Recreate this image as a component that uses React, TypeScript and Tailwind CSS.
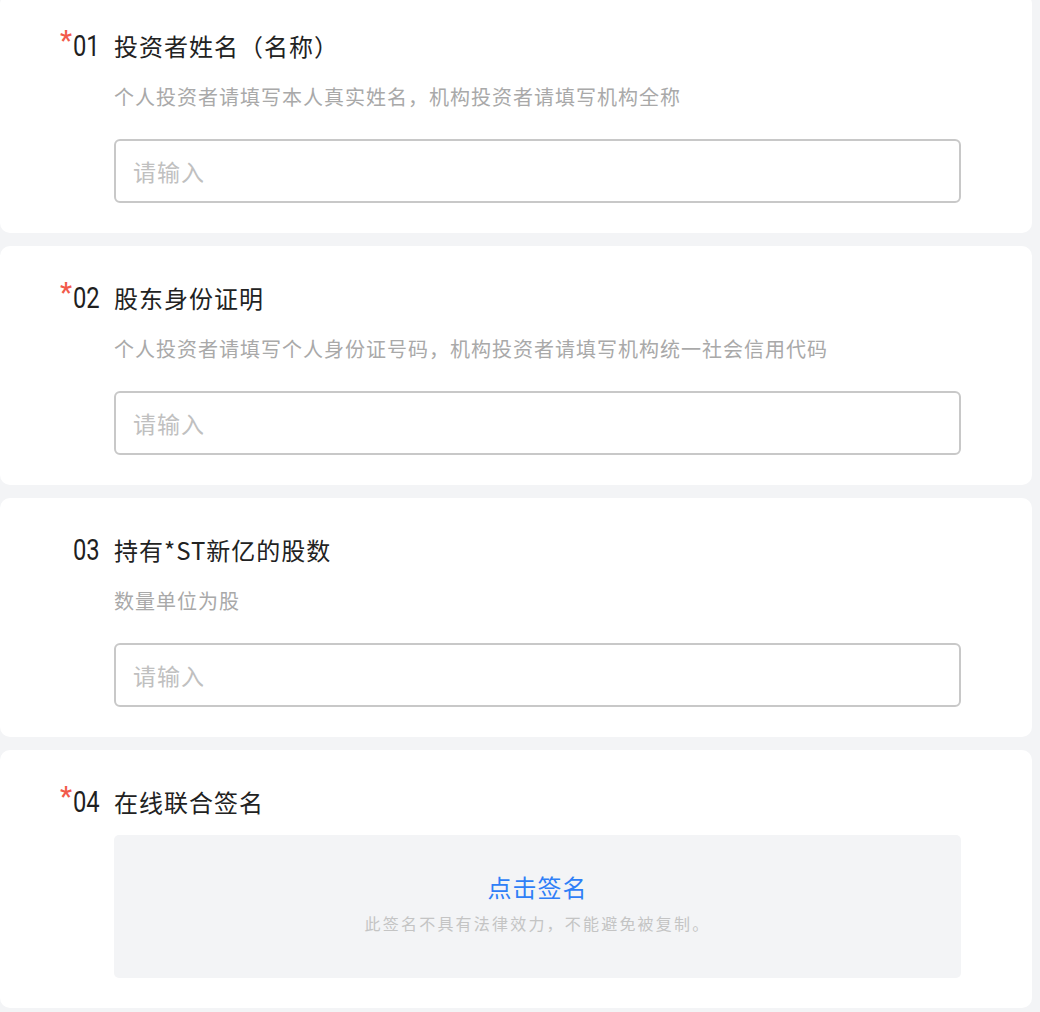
const fields = [
  {
    no: '01',
    required: true,
    title: '投资者姓名（名称）',
    hint: '个人投资者请填写本人真实姓名，机构投资者请填写机构全称',
  },
  {
    no: '02',
    required: true,
    title: '股东身份证明',
    hint: '个人投资者请填写个人身份证号码，机构投资者请填写机构统一社会信用代码',
  },
  {
    no: '03',
    required: false,
    title: '持有*ST新亿的股数',
    hint: '数量单位为股',
  },
];

const cjk = "font-['Noto_Sans_CJK_SC','Noto_Sans',sans-serif]";

const Heading = ({ no, required, title }: { no: string; required: boolean; title: string }) => (
  <div className="flex items-center h-9">
    <div className="relative w-[41px] h-9 flex items-center">
      {required && (
        <span className="absolute -left-[13px] top-0 text-[27px] leading-none font-medium text-[#f25a4b] font-['Roboto',sans-serif]">
          *
        </span>
      )}
      <span className="inline-block origin-left scale-x-[0.82] text-[29px] leading-none text-[#1f1f1f] font-['Roboto',sans-serif]">
        {no}
      </span>
    </div>
    <span className={`${cjk} text-[24px] leading-9 tracking-[1px] text-[#222]`}>{title}</span>
  </div>
);

export default function App() {
  return (
    <div className="min-h-screen bg-[#f3f4f6] pr-2 overflow-hidden">
      <div className="-mt-[6px] flex flex-col gap-[13px]">
        {fields.map((f) => (
          <div key={f.no} className="bg-white rounded-[10px] pt-[34px] pb-[30px] pl-[73px] pr-[71px]">
            <Heading no={f.no} required={f.required} title={f.title} />
            <div className="ml-[41px]">
              <p className={`${cjk} mt-[19px] text-[20px] leading-7 tracking-[1px] text-[#a9a9a9]`}>{f.hint}</p>
              <input
                placeholder="请输入"
                className={`${cjk} mt-[28px] block w-full h-16 rounded-[6px] border-2 border-[#c8c8c8] px-[17px] text-[23px] tracking-[1px] text-[#222] placeholder:text-[#c0c0c0] outline-none`}
              />
            </div>
          </div>
        ))}
        <div className="bg-white rounded-[10px] pt-[34px] pb-[30px] pl-[73px] pr-[71px]">
          <Heading no="04" required title="在线联合签名" />
          <div className="ml-[41px] mt-[15px] h-[143px] rounded-[5px] bg-[#f3f4f6] flex flex-col items-center pt-[34px]">
            <span className={`${cjk} text-[24px] leading-9 tracking-[1px] text-[#2f7ff7]`}>点击签名</span>
            <span className={`${cjk} mt-[6px] text-[16px] leading-6 tracking-[2.2px] text-[#c4c4c4]`}>
              此签名不具有法律效力，不能避免被复制。
            </span>
          </div>
        </div>
      </div>
    </div>
  );
}
